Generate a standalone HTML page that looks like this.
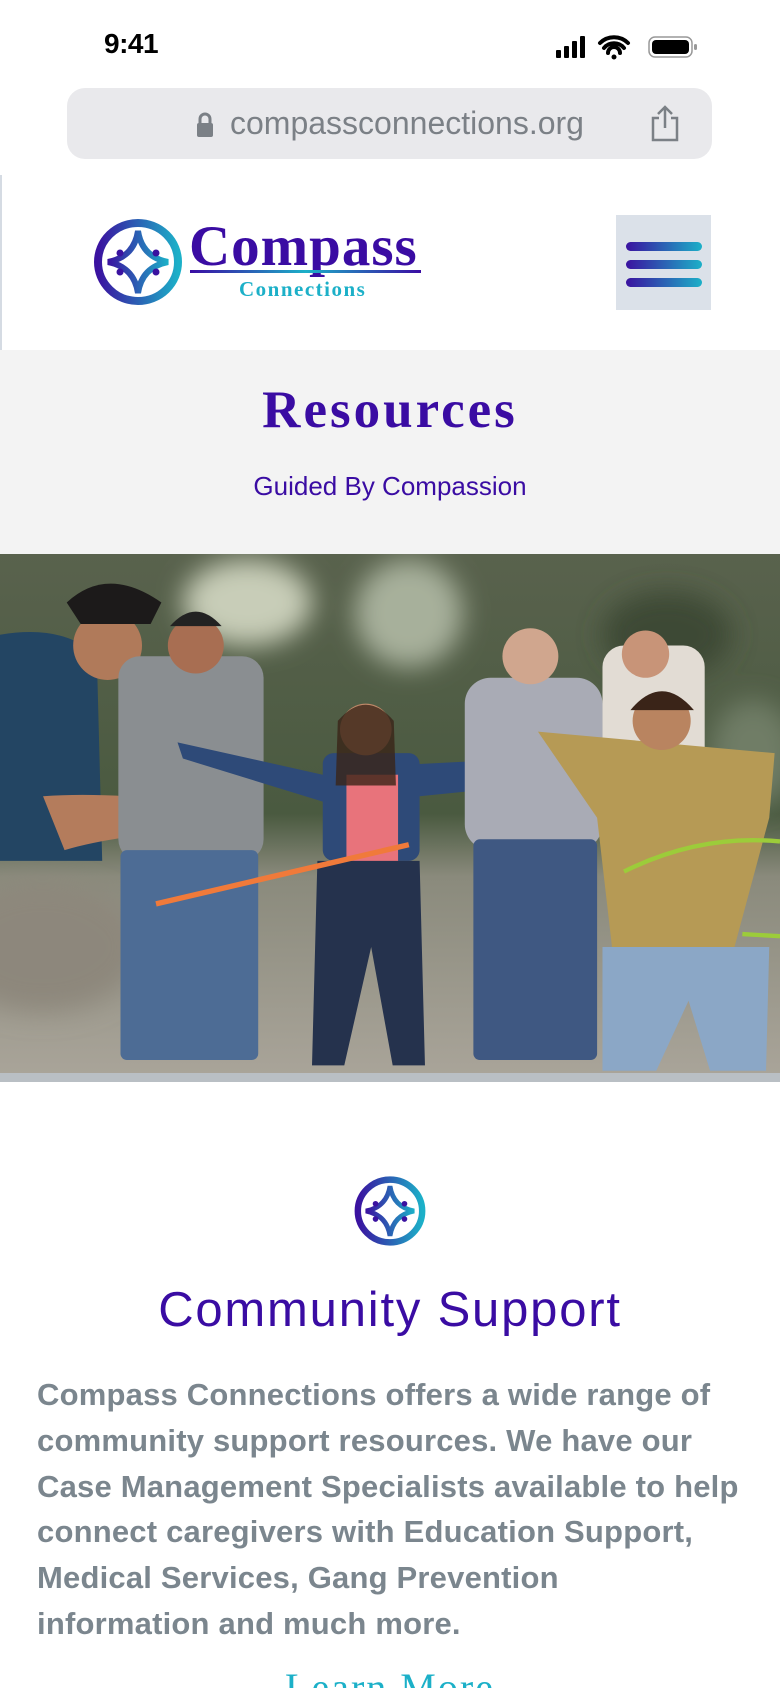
<!DOCTYPE html>
<html style="width:780px;height:1688px;overflow:hidden"><head><meta charset="utf-8"><style>
*{margin:0;padding:0;box-sizing:border-box}
body{width:780px;height:1688px;overflow:hidden;background:#fff;font-family:"Liberation Sans",sans-serif;position:relative}
#w{position:absolute;left:0;top:0;width:780px;height:1688px;overflow:hidden}
.abs{position:absolute}
</style></head><body><div id="w">
<div class="abs" style="left:104px;top:28px;font-size:28px;font-weight:bold;color:#000;letter-spacing:-0.5px">9:41</div>
<svg class="abs" style="left:554px;top:34px" width="146" height="26" viewBox="0 0 146 26">
<rect x="2" y="16" width="5" height="8" rx="1" fill="#000"/><rect x="10" y="12" width="5" height="12" rx="1" fill="#000"/><rect x="18" y="7" width="5" height="17" rx="1" fill="#000"/><rect x="26" y="2" width="5" height="22" rx="1" fill="#000"/>
<path d="M46 9a20 20 0 0 1 28 0M50 14a13 13 0 0 1 20 0M54 19a6 6 0 0 1 12 0" stroke="#000" stroke-width="4" fill="none" stroke-linecap="round"/><circle cx="60" cy="23" r="2.5" fill="#000"/>
<rect x="95" y="3" width="43" height="20" rx="6" fill="none" stroke="#999" stroke-width="1.5"/><rect x="98" y="6" width="37" height="14" rx="4" fill="#000"/><rect x="140" y="10" width="3" height="6" rx="1.5" fill="#999"/>
</svg>
<div class="abs" style="left:67px;top:88px;width:645px;height:71px;background:#e9e9ec;border-radius:18px"></div>
<svg class="abs" style="left:195px;top:112px" width="20" height="26" viewBox="0 0 20 26"><path d="M5 11V7a5 5 0 0 1 10 0v4" stroke="#7b8086" stroke-width="3" fill="none"/><rect x="2" y="11" width="16" height="14" rx="2" fill="#7b8086"/></svg>
<div class="abs" style="left:230px;top:105px;font-size:32px;color:#7b8086">compassconnections.org</div>
<svg class="abs" style="left:650px;top:104px" width="30" height="40" viewBox="0 0 30 40"><path d="M9 14H3v22h24V14h-6M15 24V3M8 10l7-7 7 7" stroke="#7b8086" stroke-width="2.5" fill="none"/></svg>
<div class="abs" style="left:0;top:175px;width:2px;height:175px;background:#d5dbe3"></div>
<svg class="abs" style="left:92px;top:217px" width="92" height="90" viewBox="0 0 92 90">
<defs><linearGradient id="g" x1="0" y1="0" x2="1" y2="0"><stop offset="0" stop-color="#3a12a0"/><stop offset="1" stop-color="#1cb0c8"/></linearGradient></defs>
<ellipse cx="46" cy="45" rx="40" ry="39" fill="none" stroke="url(#g)" stroke-width="8"/>
<path d="M46 14Q50 40 76 45Q50 50 46 76Q42 50 16 45Q42 40 46 14Z" fill="none" stroke="url(#g)" stroke-width="6"/>
<circle cx="28" cy="36" r="3.5" fill="#3a12a0"/><circle cx="64" cy="36" r="3.5" fill="#3a12a0"/><circle cx="28" cy="55" r="3.5" fill="#3a12a0"/><circle cx="64" cy="55" r="3.5" fill="#3a12a0"/>
</svg>
<div class="abs" style="left:189px;top:214px;font-family:'Liberation Serif',serif;font-weight:bold;font-size:57px;color:#3a0ca3;letter-spacing:1px">Compass</div>
<div class="abs" style="left:190px;top:270px;width:231px;height:3px;background:linear-gradient(90deg,#3a0ca3,#1cb0c8 50%,#3a0ca3)"></div>
<div class="abs" style="left:239px;top:277px;font-family:'Liberation Serif',serif;font-weight:bold;font-size:21px;color:#1cb0c8;letter-spacing:1.5px">Connections</div>
<div class="abs" style="left:616px;top:215px;width:95px;height:95px;background:#dbe1e9"></div>
<div class="abs" style="left:626px;top:242px;width:76px;height:9px;border-radius:5px;background:linear-gradient(90deg,#3a12a0,#1cb0c8)"></div>
<div class="abs" style="left:626px;top:260px;width:76px;height:9px;border-radius:5px;background:linear-gradient(90deg,#3a12a0,#1cb0c8)"></div>
<div class="abs" style="left:626px;top:278px;width:76px;height:9px;border-radius:5px;background:linear-gradient(90deg,#3a12a0,#1cb0c8)"></div>
<div class="abs" style="left:0;top:350px;width:780px;height:204px;background:#f3f3f3"></div>
<div class="abs" style="left:0;top:380px;width:780px;text-align:center;font-family:'Liberation Serif',serif;font-weight:bold;font-size:53px;color:#3a0ca3;letter-spacing:3px">Resources</div>
<div class="abs" style="left:0;top:471px;width:780px;text-align:center;font-size:26px;color:#3a0ca3">Guided By Compassion</div>
<svg class="abs" style="left:0;top:554px" width="780" height="520" viewBox="0 515 725 483" preserveAspectRatio="none">
<defs><linearGradient id="bg" x1="0" y1="0" x2="0" y2="1"><stop offset="0" stop-color="#59624d"/><stop offset="0.5" stop-color="#4a5a40"/><stop offset="0.62" stop-color="#8a8a7c"/><stop offset="1" stop-color="#a9a499"/></linearGradient>
<filter id="bl"><feGaussianBlur stdDeviation="12"/></filter></defs>
<rect x="0" y="515" width="725" height="483" fill="url(#bg)"/>
<g filter="url(#bl)"><ellipse cx="230" cy="560" rx="60" ry="40" fill="#c8cdb8"/><ellipse cx="380" cy="570" rx="50" ry="50" fill="#a7b09b"/><ellipse cx="620" cy="590" rx="60" ry="40" fill="#3c4a36"/><ellipse cx="700" cy="700" rx="40" ry="50" fill="#6f7d66"/><ellipse cx="40" cy="880" rx="90" ry="60" fill="#8d877c"/></g>
<path d="M0 590Q60 580 90 610L95 800L0 800Z" fill="#234563"/>
<path d="M40 740Q110 735 210 750L205 770Q110 775 60 790Z" fill="#b47c5c"/>
<circle cx="100" cy="600" r="32" fill="#b07a5a"/><path d="M62 560Q100 525 150 560L140 580L75 580Z" fill="#1c1a1a"/>
<rect x="110" y="610" width="135" height="190" rx="20" fill="#8a8e91"/>
<rect x="112" y="790" width="128" height="195" rx="6" fill="#4d6c95"/>
<circle cx="182" cy="600" r="26" fill="#a86e52"/><path d="M158 582Q182 555 206 582Z" fill="#222"/>
<path d="M165 690L300 720L390 710L490 705L490 730L390 740L300 745L170 705Z" fill="#2e4a78"/>
<rect x="300" y="700" width="90" height="100" rx="10" fill="#2e4a78"/>
<rect x="322" y="720" width="48" height="82" fill="#e8737b"/>
<path d="M295 800L390 800L395 990L365 990L345 880L320 990L290 990Z" fill="#25324d"/>
<circle cx="340" cy="678" r="24" fill="#c08a6a"/><path d="M314 670Q340 640 366 670L368 730L312 730Z" fill="#3a2418" opacity="0.8"/>
<path d="M145 840L380 785" stroke="#f07a3a" stroke-width="5"/>
<rect x="560" y="600" width="95" height="190" rx="20" fill="#e2dcd4"/>
<circle cx="600" cy="608" r="22" fill="#c89478"/>
<rect x="432" y="630" width="128" height="160" rx="24" fill="#a9abb5"/>
<rect x="440" y="780" width="115" height="205" rx="6" fill="#3f5882"/>
<circle cx="493" cy="610" r="26" fill="#d0a68e"/>
<path d="M500 680L720 700L715 760L680 890L570 890L555 760Z" fill="#b69a55"/>
<path d="M560 880L715 880L712 995L660 995L640 930L610 995L560 995Z" fill="#8ba7c6"/>
<circle cx="615" cy="670" r="27" fill="#b98460"/><path d="M586 660Q615 625 645 660Z" fill="#3a2418"/>
<path d="M580 810Q650 775 725 782" stroke="#9ccc3a" stroke-width="4" fill="none"/>
<path d="M690 868L725 870" stroke="#9ccc3a" stroke-width="4"/>
</svg>
<div class="abs" style="left:0;top:1073px;width:780px;height:9px;background:#b9bfc4"></div>
<svg class="abs" style="left:353px;top:1174px" width="74" height="74" viewBox="0 0 92 90">
<ellipse cx="46" cy="45" rx="40" ry="39" fill="none" stroke="url(#g)" stroke-width="8"/>
<path d="M46 14Q50 40 76 45Q50 50 46 76Q42 50 16 45Q42 40 46 14Z" fill="none" stroke="url(#g)" stroke-width="6"/>
<circle cx="28" cy="36" r="3.5" fill="#3a12a0"/><circle cx="64" cy="36" r="3.5" fill="#3a12a0"/><circle cx="28" cy="55" r="3.5" fill="#3a12a0"/><circle cx="64" cy="55" r="3.5" fill="#3a12a0"/>
</svg>
<div class="abs" style="left:0;top:1282px;width:780px;text-align:center;font-size:49px;color:#3a0ca3;letter-spacing:1.8px">Community Support</div>
<div class="abs" style="left:37px;top:1372px;width:743px;font-size:31px;line-height:45.8px;color:#7b868e;font-weight:bold;letter-spacing:0.2px;white-space:nowrap">Compass Connections offers a wide range of<br>community support resources. We have our<br>Case Management Specialists available to help<br>connect caregivers with Education Support,<br>Medical Services, Gang Prevention<br>information and much more.</div>
<div class="abs" style="left:0;top:1664px;width:780px;line-height:48px;text-align:center;font-family:'Liberation Serif',serif;font-size:40px;color:#1cb0c8;letter-spacing:2px">Learn More</div>
</div></body></html>
